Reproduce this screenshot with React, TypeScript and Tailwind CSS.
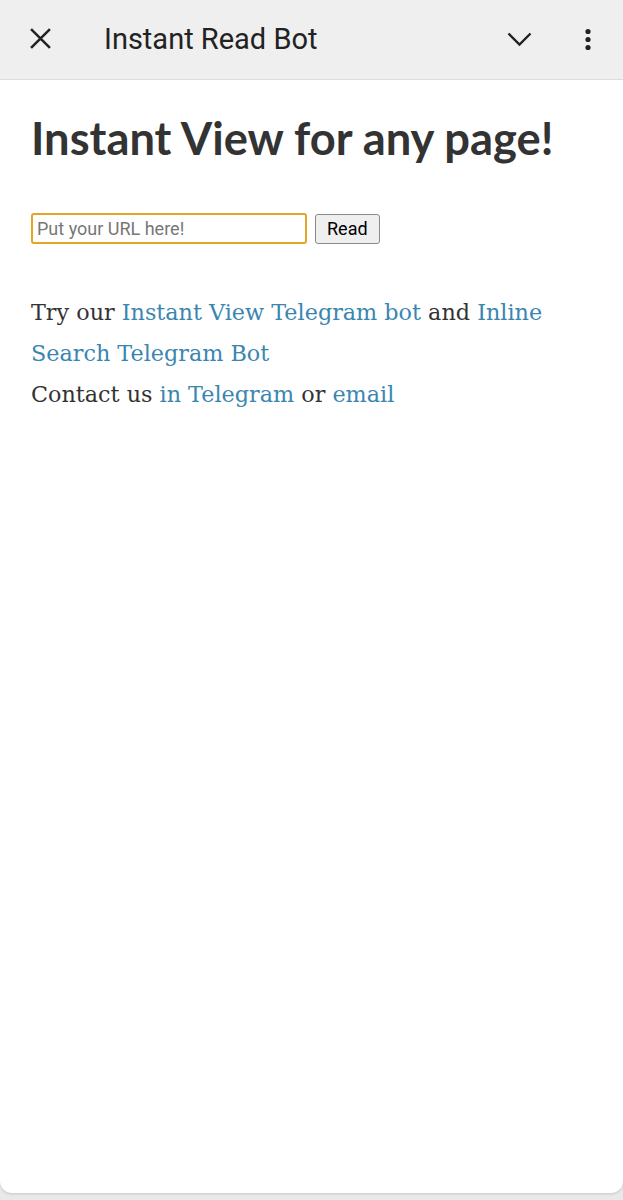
import React from "react";

export default function App() {
  return (
    <div className="w-[623px] h-[1200px] bg-[#e9e9e9] flex flex-col overflow-hidden">
      <div className="h-[80px] shrink-0 bg-[#efefef] border-b border-[#dcdcdc] flex items-center relative" style={{ fontFamily: "Roboto, sans-serif" }}>
        <div className="w-[80px] flex items-center justify-center">
          <svg width="21" height="21" viewBox="0 0 20 20" className="mt-[-2px]">
            <path d="M1 1 L19 19 M19 1 L1 19" stroke="#222" strokeWidth="2.4" fill="none" />
          </svg>
        </div>
        <div className="ml-[24px] text-[29px] text-[#222] leading-none">Instant Read Bot</div>
        <div className="flex-1" />
        <div className="w-[40px] flex items-center justify-center">
          <svg width="25" height="15" viewBox="0 0 25 15">
            <path d="M1.5 1.5 L12.5 12.5 L23.5 1.5" stroke="#222" strokeWidth="2.4" fill="none" />
          </svg>
        </div>
        <div className="w-[50px] flex items-center justify-center ml-[24px] mr-[10px]">
          <svg width="8" height="24" viewBox="0 0 8 24">
            <circle cx="4" cy="3.5" r="2.6" fill="#222" />
            <circle cx="4" cy="11.5" r="2.6" fill="#222" />
            <circle cx="4" cy="19.5" r="2.6" fill="#222" />
          </svg>
        </div>
      </div>
      <div className="flex-1 bg-white rounded-b-[12px] shadow-[0_1px_3px_rgba(0,0,0,0.15)] mb-[7px] px-[31px]">
        <h1 className="mt-[30px] text-[45.3px] font-bold text-[#333] leading-[56px] whitespace-nowrap" style={{ fontFamily: 'Lato, sans-serif' }}>
          Instant View for any page!
        </h1>
        <div className="mt-[47px] flex items-center gap-[8px]" style={{ fontFamily: "Roboto, sans-serif" }}>
          <input
            placeholder="Put your URL here!"
            className="w-[276px] h-[31px] border-2 border-[#e2a526] rounded-[3px] px-[4px] text-[18px] text-[#222] placeholder:text-[#777] outline-none"
          />
          <button className="h-[30px] px-[11px] bg-[#efefef] border border-[#8a8a8a] rounded-[3px] text-[18px] text-black leading-none">
            Read
          </button>
        </div>
        <div className="mt-[48px] text-[22.3px] leading-[41px] text-[#333]" style={{ fontFamily: '"DejaVu Serif", serif' }}>
          <p>
            Try our <a className="text-[#3a86b0]">Instant View Telegram bot</a> and{" "}
            <a className="text-[#3a86b0]">Inline Search Telegram Bot</a>
          </p>
          <p>
            Contact us <a className="text-[#3a86b0]">in Telegram</a> or <a className="text-[#3a86b0]">email</a>
          </p>
        </div>
      </div>
    </div>
  );
}
